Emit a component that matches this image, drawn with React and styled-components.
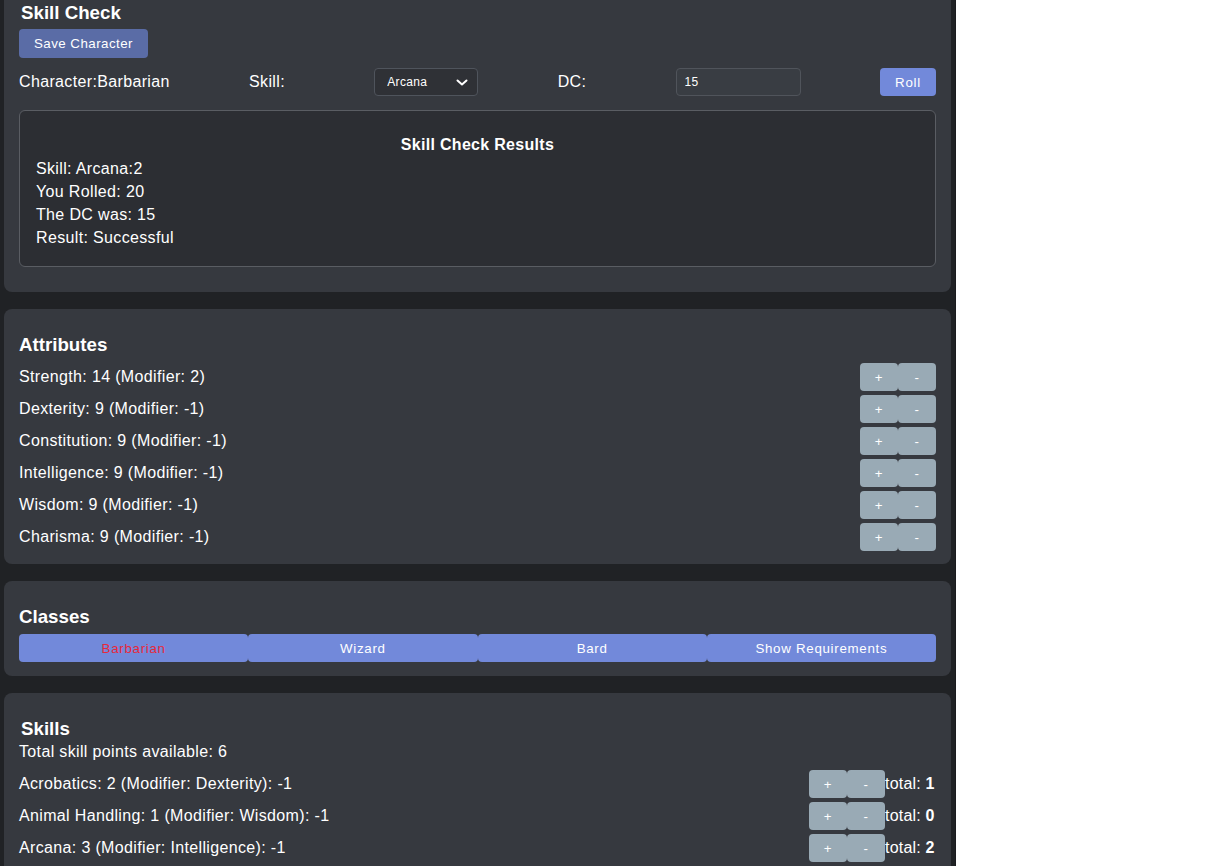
import React, { useState } from 'react';
import styled, { createGlobalStyle } from 'styled-components';

const GlobalStyle = createGlobalStyle`
  body {
    margin: 0;
    background: #ffffff;
    font-family: "Liberation Sans", Arial, sans-serif;
    overflow: hidden;
  }
`

const Page = styled.div`
  width: 947px;
  padding: 0 4px;
  margin-top: -23px;
  background: #202225;
  border-right: 1px solid #1a1b1e;
`
const Panel = styled.section`
  background: #36393f;
  border-radius: 8px;
  padding: 6px 15px ${p => p.bottom || 14}px;
  margin-bottom: 17px;
  color: #ffffff;
  font-size: 16px;
  letter-spacing: 0.35px;
`
const Title = styled.h3`
  margin: 19px 0 ${p => p.gap || 6}px;
  font-size: 18.72px;
  line-height: 22px;
  font-weight: bold;
  letter-spacing: 0;
  padding-left: ${p => p.indent || 0}px;
`
const SaveBtn = styled.button`
  height: 29px;
  padding: 0 15px;
  border: none;
  border-radius: 4px;
  background: #5a6ca6;
  color: #ffffff;
  font-family: inherit;
  font-size: 13.33px;
  letter-spacing: 0.45px;
`
const CheckRow = styled.div`
  display: flex;
  align-items: center;
  justify-content: space-between;
  height: 28px;
  margin-top: 10px;
`
const Label = styled.label`
  margin-right: ${p => p.pad ? 10 : 0}px;
`
const SelectWrap = styled.div`
  position: relative;
  width: 104px;
  height: 28px;
  svg {
    position: absolute;
    right: 10px;
    top: 11px;
    pointer-events: none;
  }
`
const Select = styled.select`
  appearance: none;
  width: 100%;
  height: 100%;
  padding: 0 12px;
  background: #2f3136;
  border: 1px solid #4f545c;
  border-radius: 4px;
  color: #ffffff;
  font-family: inherit;
  font-size: 12px;
  letter-spacing: 0.3px;
`
const DcInput = styled.input`
  box-sizing: border-box;
  width: 125px;
  height: 28px;
  padding: 0 8px;
  background: #393d43;
  border: 1px solid #50545b;
  border-radius: 4px;
  color: #ffffff;
  font-family: inherit;
  font-size: 12px;
  letter-spacing: 0.3px;
`
const Button = styled.button`
  height: 28px;
  border: none;
  border-radius: 4px;
  background: ${p => p.grey ? '#99aab5' : '#7289da'};
  color: ${p => p.active ? '#e8283a' : '#ffffff'};
  font-family: inherit;
  font-size: 13.33px;
  letter-spacing: 0.7px;
  width: ${p => p.w ? p.w + 'px' : 'auto'};
  flex: ${p => p.grow ? 1 : 'none'};
  padding: 0;
`
const Results = styled.div`
  margin: 14px 0 11px;
  padding: 24px 16px 17px;
  background: #2c2e33;
  border: 1px solid #5a5d63;
  border-radius: 6px;
`
const ResultsTitle = styled.h4`
  margin: 0 0 2px;
  text-align: center;
  font-size: 16px;
  line-height: 20px;
  letter-spacing: 0.3px;
`
const Line = styled.p`
  margin: 0;
  line-height: 23px;
`
const Rows = styled.div`
  display: flex;
  flex-direction: column;
  gap: 4px;
`
const Row = styled.div`
  display: flex;
  align-items: center;
  justify-content: space-between;
  height: 28px;
`
const Controls = styled.div`
  display: flex;
  align-items: center;
`
const Total = styled.span`
  width: 51px;
  letter-spacing: 0.2px;
  b { font-weight: bold; }
`
const ClassBar = styled.div`
  display: flex;
`
const Info = styled.div`
  line-height: 22px;
  margin-bottom: 7px;
`

const attributes = [
  ['Strength', 14, 2],
  ['Dexterity', 9, -1],
  ['Constitution', 9, -1],
  ['Intelligence', 9, -1],
  ['Wisdom', 9, -1],
  ['Charisma', 9, -1],
]

const skills = [
  ['Acrobatics', 2, 'Dexterity', -1, 1],
  ['Animal Handling', 1, 'Wisdom', -1, 0],
  ['Arcana', 3, 'Intelligence', -1, 2],
]

const Chevron = () => (
  <svg width="12" height="7" viewBox="0 0 12 7">
    <path d="M1.5 1.5 L6 5.5 L10.5 1.5" fill="none" stroke="#ffffff" strokeWidth="2" strokeLinecap="round" strokeLinejoin="round" />
  </svg>
)

const PlusMinus = () => (
  <Controls>
    <Button grey w={38}>+</Button>
    <Button grey w={38}>-</Button>
  </Controls>
)

export default function App() {
  const [skill, setSkill] = useState('Arcana');
  const [dc, setDc] = useState('15');

  return (
    <Page>
      <GlobalStyle />
      <Panel>
        <Title indent={2} gap={5}>Skill Check</Title>
        <SaveBtn>Save Character</SaveBtn>
        <CheckRow>
          <Label>Character:Barbarian</Label>
          <Label pad>Skill:</Label>
          <SelectWrap>
            <Select value={skill} onChange={e => setSkill(e.target.value)}>
              <option>Acrobatics</option>
              <option>Animal Handling</option>
              <option>Arcana</option>
            </Select>
            <Chevron />
          </SelectWrap>
          <Label pad>DC:</Label>
          <DcInput value={dc} onChange={e => setDc(e.target.value)} />
          <Button w={56}>Roll</Button>
        </CheckRow>
        <Results>
          <ResultsTitle>Skill Check Results</ResultsTitle>
          <Line>Skill: Arcana:2</Line>
          <Line>You Rolled: 20</Line>
          <Line>The DC was: 15</Line>
          <Line>Result: Successful</Line>
        </Results>
      </Panel>

      <Panel bottom={13}>
        <Title gap={7}>Attributes</Title>
        <Rows>
          {attributes.map(([name, score, mod]) => (
            <Row key={name}>
              <span>{name}: {score} (Modifier: {mod})</span>
              <PlusMinus />
            </Row>
          ))}
        </Rows>
      </Panel>

      <Panel>
        <Title>Classes</Title>
        <ClassBar>
          <Button grow active>Barbarian</Button>
          <Button grow>Wizard</Button>
          <Button grow>Bard</Button>
          <Button grow>Show Requirements</Button>
        </ClassBar>
      </Panel>

      <Panel>
        <Title gap={1} indent={2}>Skills</Title>
        <Info>Total skill points available: 6</Info>
        <Rows>
          {skills.map(([name, pts, attr, mod, total]) => (
            <Row key={name}>
              <span>{name}: {pts} (Modifier: {attr}): {mod}</span>
              <Controls>
                <PlusMinus />
                <Total>total: <b>{total}</b></Total>
              </Controls>
            </Row>
          ))}
        </Rows>
      </Panel>
    </Page>
  );
}
